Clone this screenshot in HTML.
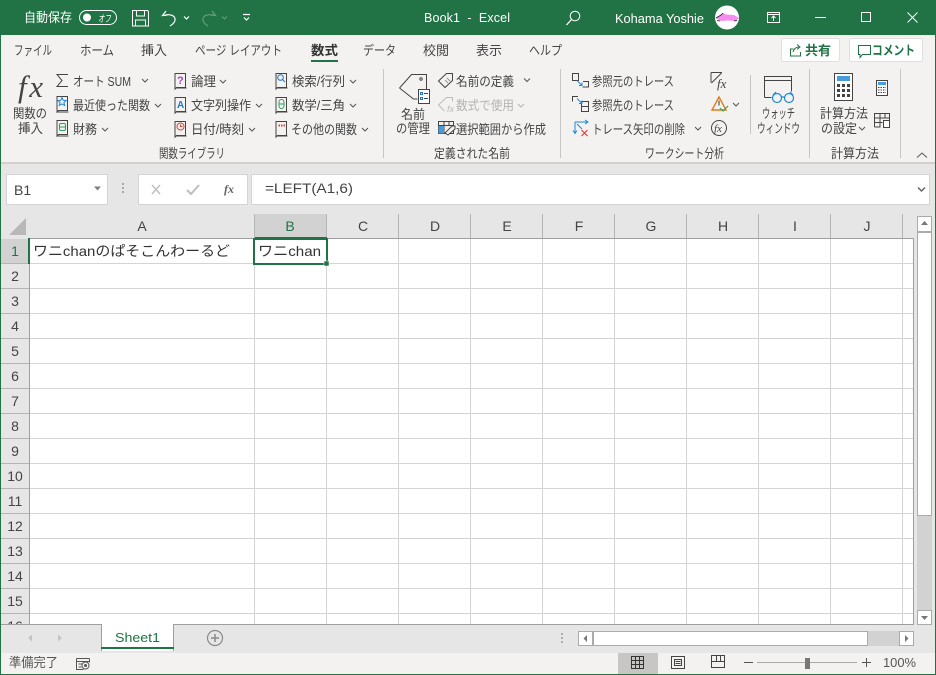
<!DOCTYPE html>
<html lang="ja"><head><meta charset="utf-8"><title>Book1 - Excel</title>
<style>
html,body{margin:0;padding:0;background:#e6e6e6;overflow:hidden}
svg{display:block;position:absolute;left:0;top:0}
text{font-family:"Liberation Sans","Noto Sans CJK JP",sans-serif;font-size:12px;fill:#444}
.w{fill:#fff}
.r{fill:#444;font-size:13px}
.h{font-size:14px;fill:#444;text-anchor:middle}
.n{font-size:14px;fill:#444;text-anchor:middle}
.ic{fill:none;stroke:#444;stroke-width:1}
.wi{fill:none;stroke:#fff;stroke-width:1}
.ch{fill:none;stroke:#555;stroke-width:1}
.g{stroke:#d4d4d4;stroke-width:1;fill:none}
</style></head><body>
<svg width="936" height="675" viewBox="0 0 936 675" xmlns="http://www.w3.org/2000/svg" shape-rendering="auto">
<!-- base -->
<rect width="936" height="675" fill="#e6e6e6"/>
<rect width="936" height="35" fill="#217346"/>
<rect x="1" y="35" width="934" height="127" fill="#f3f2f1"/>
<rect x="1" y="162" width="934" height="2" fill="#d2d0ce"/>

<!-- title bar -->
<text x="24" y="22" class="w" style="font-size:13px" textLength="48" lengthAdjust="spacingAndGlyphs">自動保存</text>
<rect x="79.500" y="10.500" width="37" height="14" rx="7" class="wi"/>
<circle cx="87" cy="17.500" r="4" fill="#fff"/>
<text x="98" y="22" class="w" style="font-size:10px;font-style:italic" textLength="13" lengthAdjust="spacingAndGlyphs">オフ</text>
<g class="wi">
<path d="M132.500 10.500h15l1 1v14.500h-16z"/><path d="M136.500 10.500v5.500h8v-5.500M135.500 26v-6h10v6"/>
<path d="M166 11l-3.500 4.500 5-.5M163 15.500c5-1.500 11-1 12 3 .7 3.500-2.500 6-5 7.500" stroke-width="1.200"/>
<path d="M184 16.500l2.500 2.500 2.500-2.500" stroke-width="1.200"/>
<path opacity=".3" d="M212 11l3.500 4.500-5-.5M215 15.500c-5-1.500-11-1-12 3-.7 3.500 2.500 6 5 7.500" stroke-width="1.200"/>
<path opacity=".3" d="M222 16.500l2.500 2.500 2.500-2.500"/>
<path d="M243 14.500h7M244 17.500l2.500 2.500 2.500-2.500" stroke-width="1.200"/>
</g>
<text x="424" y="22" class="w" textLength="86" style="font-size:12.500px" xml:space="preserve">Book1  -  Excel</text>
<g class="wi"><circle cx="575" cy="16" r="4.800"/><path d="M571.500 19.500l-5 5.500" stroke-width="1.300"/></g>
<text x="615" y="23" class="w" style="font-size:13px" textLength="89" lengthAdjust="spacingAndGlyphs">Kohama Yoshie</text>
<circle cx="727" cy="17.500" r="12" fill="#fff"/>
<path d="M716 18l5-3 2-2 3 1.500 8 .5 5 3-3 3-8-.5-7 .5-3-1.500z" fill="#f58cf0"/>
<path d="M716 18l5-3 2-2M717 20.500l3 .5M734 21l3-.5" fill="none" stroke="#222" stroke-width=".8"/>
<g class="wi">
<rect x="767.500" y="12.500" width="12" height="10"/><path d="M767.500 14.500h12M773.500 21v-5M771.500 18l2-2 2 2"/>
<path d="M815 17.500h11"/><rect x="861.500" y="12.500" width="9" height="9"/>
<path d="M907.500 12.500l10 10M917.500 12.500l-10 10"/>
</g>

<!-- tabs -->
<text x="14" y="55" class="r" textLength="38" lengthAdjust="spacingAndGlyphs">ファイル</text>
<text x="80" y="55" class="r" textLength="34" lengthAdjust="spacingAndGlyphs">ホーム</text>
<text x="141" y="55" class="r" textLength="26" lengthAdjust="spacingAndGlyphs">挿入</text>
<text x="195" y="55" class="r" textLength="87" lengthAdjust="spacingAndGlyphs">ページ レイアウト</text>
<text x="311" y="55" style="font-size:13px;font-weight:700;fill:#333" textLength="27" lengthAdjust="spacingAndGlyphs">数式</text>
<rect x="311" y="60" width="27" height="2" fill="#217346"/>
<text x="363" y="55" class="r" textLength="33" lengthAdjust="spacingAndGlyphs">データ</text>
<text x="423" y="55" class="r" textLength="26" lengthAdjust="spacingAndGlyphs">校閲</text>
<text x="476" y="55" class="r" textLength="26" lengthAdjust="spacingAndGlyphs">表示</text>
<text x="529" y="55" class="r" textLength="33" lengthAdjust="spacingAndGlyphs">ヘルプ</text>

<rect x="781.500" y="38.500" width="58" height="23" rx="2" fill="#fff" stroke="#e1dfdd"/>
<rect x="849.500" y="38.500" width="73" height="23" rx="2" fill="#fff" stroke="#e1dfdd"/>
<g fill="none" stroke="#217346"><path d="M790.500 48.500v7.500h10v-4M790.500 49h3M793 52c1-3 3-5 6-5M797 44.500l3 2.500-3 2.500"/><path d="M858.500 45.500h12v9h-8l-2.500 3v-3h-1.500z" /></g>
<text x="805" y="55" style="font-size:13px;font-weight:700;fill:#217346" textLength="26" lengthAdjust="spacingAndGlyphs">共有</text>
<text x="872" y="55" style="font-size:13px;font-weight:700;fill:#217346" textLength="43" lengthAdjust="spacingAndGlyphs">コメント</text>

<!-- dividers -->
<g fill="#c8c6c4"><rect x="383" y="69" width="1" height="89"/><rect x="560" y="69" width="1" height="89"/><rect x="750" y="75" width="1" height="59"/><rect x="809" y="69" width="1" height="89"/><rect x="900" y="69" width="1" height="89"/></g>

<!-- fx insert -->
<text x="18" y="97" style="font-family:'Liberation Serif',serif;font-style:italic;font-size:31px;fill:#444" textLength="25">fx</text>
<text x="13" y="118" class="r" textLength="34" lengthAdjust="spacingAndGlyphs">関数の</text>
<text x="18" y="133" class="r" textLength="25" lengthAdjust="spacingAndGlyphs">挿入</text>

<!-- col 1 -->
<path d="M68 74.500H57l5 6-5 6h11" class="ic"/>
<text x="73" y="86" class="r" textLength="58" lengthAdjust="spacingAndGlyphs">オート SUM</text>
<path d="M142 79l3 3 3-3" class="ch"/>
<path d="M57 96.500h10.500v14H58.500l-1.500 1.500z" class="ic"/><rect x="57.500" y="111.500" width="11" height="1" fill="#444"/>
<path d="M62 97.500l1.200 2.800 3 .2-2.300 2 .8 3-2.700-1.600-2.700 1.600.8-3-2.300-2 3-.2z" fill="none" stroke="#1e88d8"/>
<text x="73" y="110" class="r" textLength="77" lengthAdjust="spacingAndGlyphs">最近使った関数</text>
<path d="M155 104l3 3 3-3" class="ch"/>
<path d="M57 120.500h10.500v14H58.500l-1.500 1.500z" class="ic"/><rect x="57.500" y="135.500" width="11" height="1" fill="#444"/>
<rect x="59.500" y="123.500" width="6" height="7" rx="1.500" fill="none" stroke="#2e9e5a"/><path d="M59.500 127h6" stroke="#2e9e5a"/>
<text x="73" y="134" class="r" textLength="24" lengthAdjust="spacingAndGlyphs">財務</text>
<path d="M102 128l3 3 3-3" class="ch"/>

<!-- col 2 -->
<g class="ic">
<path d="M175 73.500h10.500v14H176.500l-1.500 1.500z"/><path d="M175 97.500h10.500v14H176.500l-1.500 1.500z"/><path d="M175 121.500h10.500v14H176.500l-1.500 1.500z"/>
</g>
<rect x="175.500" y="87.500" width="11" height="1" fill="#444"/><rect x="175.500" y="111.500" width="11" height="1" fill="#444"/><rect x="175.500" y="135.500" width="11" height="1" fill="#444"/>
<text x="177" y="84" style="font-size:11px;font-weight:700;fill:#a347c0">?</text>
<text x="177" y="108" style="font-size:10px;font-weight:700;fill:#1e78c8">A</text>
<circle cx="180.500" cy="126.500" r="3.500" fill="none" stroke="#d9453a"/><path d="M180.500 124.500v2h2" stroke="#d9453a" fill="none"/>
<text x="191" y="86" class="r" textLength="25" lengthAdjust="spacingAndGlyphs">論理</text>
<path d="M220 80l3 3 3-3" class="ch"/>
<text x="191" y="110" class="r" textLength="60" lengthAdjust="spacingAndGlyphs">文字列操作</text>
<path d="M256 104l3 3 3-3" class="ch"/>
<text x="191" y="134" class="r" textLength="53" lengthAdjust="spacingAndGlyphs">日付/時刻</text>
<path d="M249 128l3 3 3-3" class="ch"/>

<!-- col 3 -->
<g class="ic">
<path d="M276 73.500h10.500v14H277.500l-1.500 1.500z"/><path d="M276 97.500h10.500v14H277.500l-1.500 1.500z"/><path d="M276 121.500h10.500v14H277.500l-1.500 1.500z"/>
</g>
<rect x="276.500" y="87.500" width="11" height="1" fill="#444"/><rect x="276.500" y="111.500" width="11" height="1" fill="#444"/><rect x="276.500" y="135.500" width="11" height="1" fill="#444"/>
<g fill="none" stroke="#1e78c8"><circle cx="280.500" cy="77.500" r="2.800"/><path d="M282.500 79.500l2.500 2.500"/></g>
<g fill="none" stroke="#2e9e5a"><rect x="279" y="99.500" width="5" height="9" rx="2.500"/><path d="M279 104h5"/></g>
<path d="M278.500 125.500h1.500M281 125.500h1.500M283.500 125.500h1.500" stroke="#d9453a" stroke-width="2"/>
<text x="292" y="86" class="r" textLength="53" lengthAdjust="spacingAndGlyphs">検索/行列</text>
<path d="M350 80l3 3 3-3" class="ch"/>
<text x="292" y="110" class="r" textLength="53" lengthAdjust="spacingAndGlyphs">数学/三角</text>
<path d="M350 104l3 3 3-3" class="ch"/>
<text x="291" y="134" class="r" textLength="66" lengthAdjust="spacingAndGlyphs">その他の関数</text>
<path d="M362 128l3 3 3-3" class="ch"/>
<text x="159" y="158" class="r" textLength="66" lengthAdjust="spacingAndGlyphs">関数ライブラリ</text>

<!-- names -->
<path d="M399.500 88l12-13.500h15v15.500M399.500 88l14 11h4" class="ic"/><circle cx="421" cy="79" r="1.200" class="ic"/>
<rect x="418.500" y="89.500" width="11" height="14" fill="#fff" stroke="#444"/>
<path d="M420.500 92.500h2v2h-2zM420.500 97.500h2v2h-2z" fill="none" stroke="#1e78c8"/><path d="M424 93.500h4M424 98.500h4" stroke="#444"/>
<text x="401" y="119" class="r" textLength="24" lengthAdjust="spacingAndGlyphs">名前</text>
<text x="396" y="133" class="r" textLength="34" lengthAdjust="spacingAndGlyphs">の管理</text>
<path d="M438.500 81l8-7.500h6v7l-7.500 7z" class="ic"/><path d="M447 78l4 4M445 80l3 3" stroke="#999" fill="none"/>
<text x="456" y="86" class="r" textLength="58" lengthAdjust="spacingAndGlyphs">名前の定義</text>
<path d="M524 78.500l3 3 3-3" class="ch"/>
<path d="M438.500 105l8-7.500h6v4M438.500 105l6 6" fill="none" stroke="#bbb"/><text x="447" y="112" style="font-size:9px;font-style:italic;fill:#bbb">fx</text>
<text x="456" y="110" style="fill:#b5b3b1;font-size:13px" textLength="58" lengthAdjust="spacingAndGlyphs">数式で使用</text>
<path d="M518 104l3 3 3-3" fill="none" stroke="#b5b3b1"/>
<rect x="438.500" y="121.500" width="15" height="12" fill="none" stroke="#444"/><path d="M438.500 125.500h15M444 121.500v12M449 121.500v4" stroke="#444"/>
<rect x="438.500" y="126" width="5.500" height="7.500" fill="#4a9bdc"/>
<path d="M445 133l7-7h3v3l-7 6z" fill="#f3f2f1" stroke="#444"/>
<text x="456" y="134" class="r" textLength="90" lengthAdjust="spacingAndGlyphs">選択範囲から作成</text>
<text x="434" y="158" class="r" textLength="76" lengthAdjust="spacingAndGlyphs">定義された名前</text>

<!-- audit -->
<g class="ic"><rect x="572.500" y="73.500" width="6" height="7"/><path d="M583 81.500h5.500v5.500h-6"/><path d="M578 96.500h-5.500v5"/><rect x="581.500" y="101.500" width="7" height="10"/><path d="M581.500 106.500h7"/></g>
<path d="M577 80.500l5 5M582 82.500v3h-3M577 98.500l5 5M582 100.500v3h-3" fill="none" stroke="#1e88d8"/>
<text x="592" y="86" class="r" textLength="82" lengthAdjust="spacingAndGlyphs">参照元のトレース</text>
<text x="592" y="110" class="r" textLength="82" lengthAdjust="spacingAndGlyphs">参照先のトレース</text>
<path d="M575 122v11M575 122h12M573 130.500l2 3 2-3M585 120l3 2-3 2M577 124l5 5" fill="none" stroke="#1e88d8"/>
<path d="M581.500 130l6 6M587.500 130l-6 6" stroke="#e0403a" fill="none" stroke-width="1.200"/>
<text x="592" y="134" class="r" textLength="93" lengthAdjust="spacingAndGlyphs">トレース矢印の削除</text>
<path d="M695 127l3 3 3-3" class="ch"/>
<path d="M711 72.500h11M711 72.500v10M711.500 83l10-10" class="ic"/><text x="717" y="88" style="font-family:'Liberation Serif',serif;font-style:italic;font-size:13px;fill:#444">fx</text>
<path d="M719 97l-7 13h14z" fill="none" stroke="#e07b1a" stroke-width="1.400"/><path d="M719 100.500v5" stroke="#333"/><path d="M720 108l3 3 5-5" stroke="#3ca35c" stroke-width="1.200" fill="none"/>
<path d="M733 103l3 3 3-3" class="ch"/>
<circle cx="719" cy="128" r="7.500" class="ic"/><text x="714" y="132" style="font-family:'Liberation Serif',serif;font-style:italic;font-size:11px;fill:#444">fx</text>
<text x="645" y="158" class="r" textLength="79" lengthAdjust="spacingAndGlyphs">ワークシート分析</text>

<!-- watch -->
<path d="M764.500 97.500V76.500h27v15" class="ic"/><path d="M764.500 80.500h27M764.500 97.500h7" class="ic"/>
<g fill="none" stroke="#1e88d8" stroke-width="1.200"><circle cx="777" cy="98" r="4.500"/><circle cx="789" cy="98" r="4.500"/><path d="M781.500 97h3M773 95l3-3M793 95l-3-3"/></g>
<text x="762" y="118" class="r" textLength="33" lengthAdjust="spacingAndGlyphs">ウォッチ</text>
<text x="757" y="133" class="r" textLength="43" lengthAdjust="spacingAndGlyphs">ウィンドウ</text>

<!-- calc -->
<rect x="834.500" y="73.500" width="18" height="27" fill="#fff" stroke="#444"/>
<rect x="837" y="76" width="13" height="5" fill="#4a9bdc"/>
<g fill="#444"><rect x="837" y="84" width="3" height="3"/><rect x="842" y="84" width="3" height="3"/><rect x="847" y="84" width="3" height="3"/><rect x="837" y="89" width="3" height="3"/><rect x="842" y="89" width="3" height="3"/><rect x="847" y="89" width="3" height="3"/><rect x="837" y="94" width="3" height="3"/><rect x="842" y="94" width="3" height="3"/><rect x="847" y="94" width="3" height="3"/></g>
<text x="820" y="118" class="r" textLength="48" lengthAdjust="spacingAndGlyphs">計算方法</text>
<text x="821" y="133" class="r" textLength="36" lengthAdjust="spacingAndGlyphs">の設定</text>
<path d="M859 127l3 3 3-3" class="ch"/>
<rect x="876.500" y="80.500" width="11" height="15" fill="#fff" stroke="#444"/><rect x="878" y="82" width="8" height="3" fill="#4a9bdc"/>
<path d="M878 87.500h8M878 90h8M878 92.500h8" stroke="#444" stroke-dasharray="1.500 1"/>
<path d="M874.500 127v-13.500h15V121M874.500 118h15M874.500 122.500h8M880 113.500v13M885 113.500v5M874.500 127h6" class="ic"/>
<rect x="883.500" y="120.500" width="6" height="7" fill="#fff" stroke="#444"/>
<text x="831" y="158" class="r" textLength="48" lengthAdjust="spacingAndGlyphs">計算方法</text>
<path d="M917 157.500l5-4.500 5 4.500" fill="none" stroke="#555"/>

<!-- formula bar -->
<rect x="6.500" y="174.500" width="101" height="30" fill="#fff" stroke="#d4d4d4"/>
<text x="14" y="195" style="font-size:14px;fill:#444">B1</text>
<path d="M94 186.500h7l-3.500 4z" fill="#808080"/>
<g fill="#aaa"><rect x="122" y="183" width="2" height="2"/><rect x="122" y="187" width="2" height="2"/><rect x="122" y="191" width="2" height="2"/></g>
<rect x="138.500" y="174.500" width="109" height="30" fill="#fff" stroke="#d4d4d4"/>
<path d="M152 185l8 9M160 185l-8 9" stroke="#bfbfbf" stroke-width="1.500" fill="none"/>
<path d="M187 190l4 4 8-9" stroke="#bfbfbf" stroke-width="2" fill="none"/>
<text x="224" y="193" style="font-family:'Liberation Serif',serif;font-style:italic;font-weight:700;font-size:12px;fill:#666">fx</text>
<rect x="251.500" y="174.500" width="678" height="30" fill="#fff" stroke="#d4d4d4"/>
<text x="265" y="193" style="font-size:14px;fill:#444" textLength="88" lengthAdjust="spacingAndGlyphs">=LEFT(A1,6)</text>
<path d="M918 187.500l3.500 3.500 3.500-3.500" fill="none" stroke="#666" stroke-width="1.500"/>

<!-- sheet -->
<rect x="30" y="239" width="884" height="386" fill="#fff"/>
<rect x="1" y="214" width="913" height="25" fill="#e6e6e6"/>
<rect x="1" y="239" width="29" height="386" fill="#e6e6e6"/>
<rect x="255" y="214" width="72" height="24" fill="#d2d2d2"/>
<rect x="1" y="239" width="28" height="24" fill="#d2d2d2"/>
<path d="M26 218v17H9z" fill="#b8b8b8"/>
<path class="g" d="M30 263.500H914M30 288.500H914M30 313.500H914M30 338.500H914M30 363.500H914M30 388.500H914M30 413.500H914M30 438.500H914M30 463.500H914M30 488.500H914M30 513.500H914M30 538.500H914M30 563.500H914M30 588.500H914M30 613.500H914"/>
<path class="g" d="M254.500 239V625M326.500 239V625M398.500 239V625M470.500 239V625M542.500 239V625M614.500 239V625M686.500 239V625M758.500 239V625M830.500 239V625M902.500 239V625"/>
<path stroke="#b5b5b5" fill="none" d="M326.500 214v24M398.500 214v24M470.500 214v24M542.500 214v24M614.500 214v24M686.500 214v24M758.500 214v24M830.500 214v24M902.500 214v24M254.500 214v24"/>
<path stroke="#b5b5b5" fill="none" d="M1 288.500h28M1 313.500h28M1 338.500h28M1 363.500h28M1 388.500h28M1 413.500h28M1 438.500h28M1 463.500h28M1 488.500h28M1 513.500h28M1 538.500h28M1 563.500h28M1 588.500h28M1 613.500h28M1 263.500h28"/>
<rect x="29" y="238" width="885" height="1" fill="#9e9e9e"/><rect x="29" y="239" width="1" height="386" fill="#9e9e9e"/>
<rect x="913" y="239" width="1" height="386" fill="#9e9e9e"/>
<rect x="28" y="238" width="2" height="26" fill="#217346"/>
<rect x="255" y="237" width="72" height="2" fill="#217346"/>
<text class="h" x="142" y="231">A</text><text class="h" x="290" y="231" style="fill:#217346">B</text><text class="h" x="363" y="231">C</text><text class="h" x="435" y="231">D</text><text class="h" x="507" y="231">E</text><text class="h" x="579" y="231">F</text><text class="h" x="651" y="231">G</text><text class="h" x="723" y="231">H</text><text class="h" x="795" y="231">I</text><text class="h" x="867" y="231">J</text>
<text class="n" x="15" y="256" style="fill:#217346">1</text><text class="n" x="15" y="281">2</text><text class="n" x="15" y="306">3</text><text class="n" x="15" y="331">4</text><text class="n" x="15" y="356">5</text><text class="n" x="15" y="381">6</text><text class="n" x="15" y="406">7</text><text class="n" x="15" y="431">8</text><text class="n" x="15" y="456">9</text><text class="n" x="15" y="481">10</text><text class="n" x="15" y="506">11</text><text class="n" x="15" y="531">12</text><text class="n" x="15" y="556">13</text><text class="n" x="15" y="581">14</text><text class="n" x="15" y="606">15</text><text class="n" x="15" y="631">16</text>
<text x="33" y="256" style="font-size:14px;fill:#333" textLength="197" lengthAdjust="spacingAndGlyphs">ワニchanのぱそこんわーるど</text>
<text x="258" y="256" style="font-size:14px;fill:#333" textLength="63" lengthAdjust="spacingAndGlyphs">ワニchan</text>
<rect x="254" y="239" width="73" height="25" fill="none" stroke="#217346" stroke-width="2"/>
<rect x="324" y="261" width="5" height="5" fill="#217346" stroke="#fff" stroke-width=".5"/>

<!-- vertical scrollbar -->
<rect x="914" y="214" width="21" height="411" fill="#e6e6e6"/>
<rect x="917.500" y="216.500" width="14" height="15" fill="#fff" stroke="#ababab"/>
<path d="M921 225h7l-3.500-4z" fill="#777"/>
<rect x="917.500" y="232.500" width="14" height="283" fill="#fff" stroke="#ababab"/>
<rect x="917" y="516" width="15" height="94" fill="#d2d2d2"/>
<rect x="917.500" y="610.500" width="14" height="14" fill="#fff" stroke="#ababab"/>
<path d="M921 616h7l-3.500 4z" fill="#777"/>

<!-- tab bar -->
<rect x="1" y="625" width="934" height="28" fill="#e6e6e6"/>
<rect x="1" y="624" width="100" height="1" fill="#9e9e9e"/><rect x="174" y="624" width="740" height="1" fill="#9e9e9e"/>
<rect x="101" y="624" width="73" height="27" fill="#fff"/>
<path d="M101.500 624v27M173.500 624v27" stroke="#9e9e9e"/>
<rect x="101" y="647" width="73" height="2" fill="#217346"/>
<path d="M32 634.500v7l-4-3.500zM58 634.500v7l4-3.500z" fill="#c4c4c4"/>
<text x="115" y="642" style="font-size:13px;fill:#217346" textLength="45" lengthAdjust="spacingAndGlyphs">Sheet1</text>
<circle cx="215" cy="638" r="7.500" fill="none" stroke="#8a8a8a" stroke-width="1.200"/><path d="M211 638h8M215 634v8" stroke="#8a8a8a" stroke-width="1.500"/>
<g fill="#b0b0b0"><rect x="561" y="633" width="2" height="2"/><rect x="561" y="637" width="2" height="2"/><rect x="561" y="641" width="2" height="2"/></g>
<rect x="578.500" y="631.500" width="14" height="14" fill="#fff" stroke="#ababab"/><path d="M587 635v7l-3.500-3.500z" fill="#777"/>
<rect x="593.500" y="631.500" width="274" height="14" fill="#fff" stroke="#ababab"/>
<rect x="868" y="631" width="31" height="15" fill="#d2d2d2"/>
<rect x="899.500" y="631.500" width="14" height="14" fill="#fff" stroke="#ababab"/><path d="M905 635v7l3.500-3.500z" fill="#777"/>

<!-- status bar -->
<rect x="1" y="653" width="934" height="21" fill="#f3f2f1"/>
<text x="9" y="667" style="fill:#555;font-size:13px" textLength="49" lengthAdjust="spacingAndGlyphs">準備完了</text>
<path d="M76.500 658.500h13M76.500 658.500v11h7M76.500 661.500h13M78.500 664h4M78.500 667h3M89.500 658.500v4" fill="none" stroke="#555"/><circle cx="85.500" cy="665.500" r="3.500" fill="none" stroke="#555"/><circle cx="85.500" cy="665.500" r="1.500" fill="#555"/>
<rect x="618" y="653" width="40" height="21" fill="#c8c6c4"/>
<path d="M631.500 656.500h12v12h-12zM631.500 660.500h12M631.500 664.500h12M635.500 656.500v12M639.500 656.500v12" fill="none" stroke="#333"/>
<path d="M671.500 656.500h13v12h-13zM674.500 659.500h7v6h-7zM675.500 661.500h5M675.500 663.500h5" fill="none" stroke="#444"/>
<path d="M711.500 655.500h13v12h-13zM711.500 661.500h13M716.500 655.500v6M720.500 655.500v6" fill="none" stroke="#444"/>
<path d="M744 662.500h9" stroke="#555"/><rect x="757" y="662" width="100" height="1" fill="#aaa"/><rect x="805" y="658" width="5" height="11" fill="#777"/>
<path d="M862 662.500h9M866.500 658v9" stroke="#555" fill="none"/>
<text x="883" y="667" style="fill:#555;font-size:13px" textLength="33" lengthAdjust="spacingAndGlyphs">100%</text>

<!-- window border -->
<rect x="0" y="35" width="1" height="640" fill="#217346"/>
<rect x="935" y="35" width="1" height="640" fill="#217346"/>
<rect x="0" y="674" width="936" height="1" fill="#217346"/>
</svg>
</body></html>
